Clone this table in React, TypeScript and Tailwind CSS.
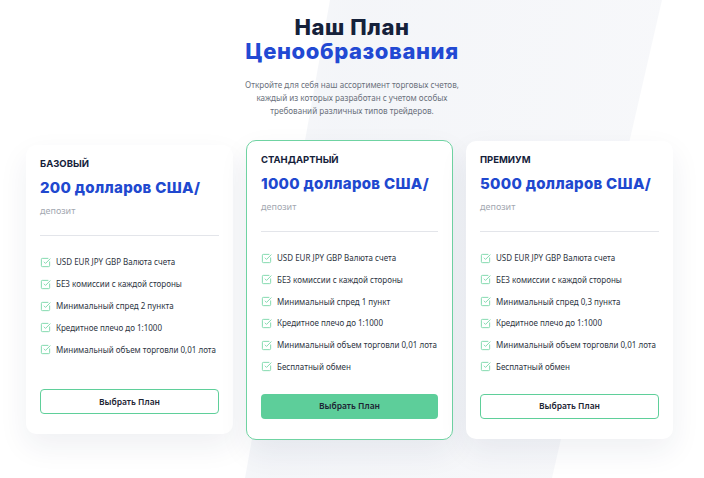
import { SquareCheckBig } from 'lucide-react';

type Plan = {
  name: string;
  price: string;
  features: string[];
  featured?: boolean;
  short?: boolean;
};

const plans: Plan[] = [
  {
    name: 'БАЗОВЫЙ',
    price: '200 долларов США/',
    short: true,
    features: [
      'USD EUR JPY GBP Валюта счета',
      'БЕЗ комиссии с каждой стороны',
      'Минимальный спред 2 пункта',
      'Кредитное плечо до 1:1000',
      'Минимальный объем торговли 0,01 лота',
    ],
  },
  {
    name: 'СТАНДАРТНЫЙ',
    price: '1000 долларов США/',
    featured: true,
    features: [
      'USD EUR JPY GBP Валюта счета',
      'БЕЗ комиссии с каждой стороны',
      'Минимальный спред 1 пункт',
      'Кредитное плечо до 1:1000',
      'Минимальный объем торговли 0,01 лота',
      'Бесплатный обмен',
    ],
  },
  {
    name: 'ПРЕМИУМ',
    price: '5000 долларов США/',
    features: [
      'USD EUR JPY GBP Валюта счета',
      'БЕЗ комиссии с каждой стороны',
      'Минимальный спред 0,3 пункта',
      'Кредитное плечо до 1:1000',
      'Минимальный объем торговли 0,01 лота',
      'Бесплатный обмен',
    ],
  },
];

function PlanCard({ plan }: { plan: Plan }) {
  return (
    <div
      className={
        'w-[207px] rounded-[10px] bg-white px-[14px] pt-[12px] flex flex-col shadow-[0_12px_30px_rgba(30,45,80,0.07)] ' +
        (plan.featured ? 'border border-[#6fd3a2] pb-[20px]' : 'pb-[20px]')
      }
    >
      <div className="font-['Inter',sans-serif] text-[9.5px] font-bold leading-[14px] text-[#14213a]">
        {plan.name}
      </div>
      <div className="mt-[7px] whitespace-nowrap font-['Inter',sans-serif] text-[15px] font-extrabold leading-[20px] text-[#2048cf] tracking-[0.3px]">
        {plan.price}
      </div>
      <div className="mt-[7px] font-['Noto_Sans',sans-serif] text-[9px] leading-[12px] text-[#a3a8b1]">депозит</div>
      <div className="mt-[18px] h-px bg-[#e3e5ea]" />
      <ul className={'mt-[19px] flex flex-col gap-[7.8px] ' + (plan.short ? 'min-h-[114px]' : '')}>
        {plan.features.map((f) => (
          <li key={f} className="flex items-center gap-[5px] h-[14px]">
            <SquareCheckBig size={11} strokeWidth={2} className="text-[#7ad7a9] shrink-0" />
            <span className="whitespace-nowrap font-['Noto_Sans',sans-serif] text-[8px] leading-[14px] text-[#2d3442]">
              {f}
            </span>
          </li>
        ))}
      </ul>
      <button
        className={
          'mt-[20px] h-[25px] w-full rounded-[4px] font-["Noto_Sans",sans-serif] text-[8.5px] font-semibold text-[#1d2433] ' +
          (plan.featured ? 'bg-[#5dce9a]' : 'border border-[#5fcf9a] bg-white')
        }
      >
        Выбрать План
      </button>
    </div>
  );
}

export default function App() {
  return (
    <div className="relative h-[478px] w-full overflow-hidden bg-white">
      {/* soft diagonal band behind the cards */}
      <div className="pointer-events-none absolute inset-0 [clip-path:polygon(330px_0,662px_0,552px_478px,245px_478px)] bg-[linear-gradient(100deg,rgba(244,246,249,0)_0%,rgba(241,243,247,0.8)_45%,rgba(245,246,249,0.7)_100%)]" />

      <div className="relative flex flex-col items-center">
        <h1 className="mt-[15px] text-center font-['Inter',sans-serif] text-[22px] font-extrabold leading-[24px] text-[#15213a] tracking-[0.6px]">
          <span className="block">Наш План</span>
          <span className="block text-[#2249d3]">Ценообразования</span>
        </h1>
        <p className="mt-[15px] w-[224px] text-center font-['Noto_Sans',sans-serif] text-[8.1px] leading-[13px] text-[#6b717c]">
          Откройте для себя наш ассортимент торговых счетов, каждый из которых разработан с учетом особых требований различных типов трейдеров.
        </p>

        <div className="mt-[23px] ml-[-5px] flex items-center gap-[13px]">
          {plans.map((p) => (
            <PlanCard key={p.name} plan={p} />
          ))}
        </div>
      </div>
    </div>
  );
}
